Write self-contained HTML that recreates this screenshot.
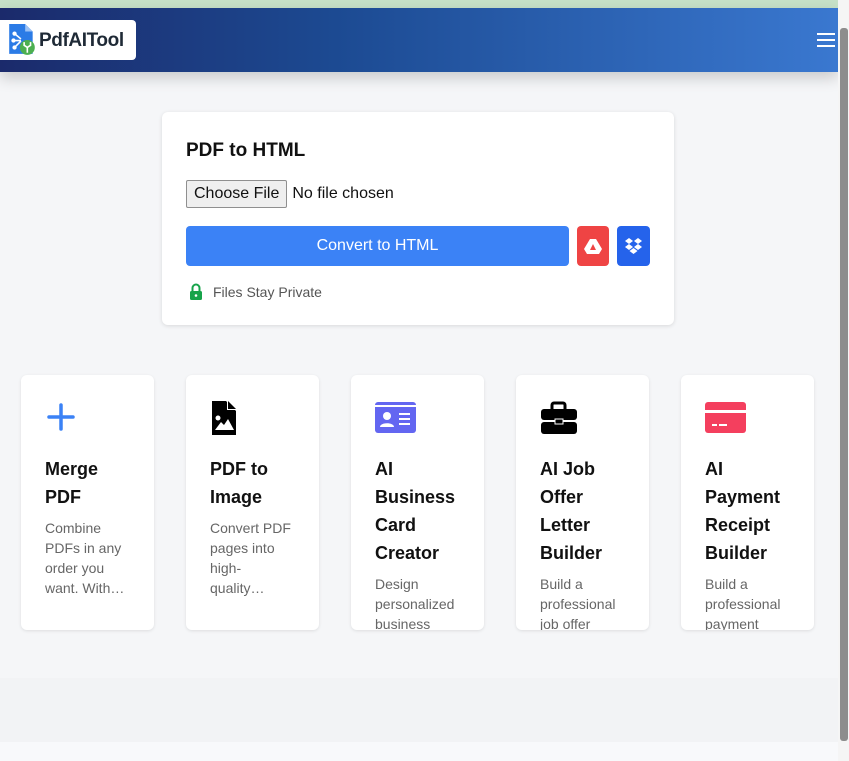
<!DOCTYPE html>
<html><head><style>
*{box-sizing:border-box;margin:0;padding:0}
body{width:849px;height:761px;overflow:hidden;background:#f8f9fb;font-family:"Liberation Sans",Arial,sans-serif;position:relative}
.top{position:absolute;left:0;top:0;width:849px;height:8px;background:#c6e1c8}
.hdr{position:absolute;left:0;top:8px;width:838px;height:64px;background:linear-gradient(90deg,#1b2a6b 0%,#1c4a92 40%,#3a78d0 100%);box-shadow:0 6px 14px rgba(0,0,0,.18)}
.logo{position:absolute;left:0;top:12px;width:136px;height:40px;background:#fff;border-radius:0 4px 4px 0}
.logo svg{position:absolute;left:7px;top:4px}
.logo span{position:absolute;left:39px;top:10px;font-size:19px;color:#1f2a36;font-weight:bold;letter-spacing:-.4px}
.burger{position:absolute;left:817px;top:25px;width:18px}
.burger i{display:block;height:2px;background:#fff;margin-bottom:4px}
.sect{position:absolute;left:0;top:72px;width:838px;height:253px;background:#f5f6f8}
.card1{position:absolute;left:162px;top:112px;width:512px;height:213px;background:#fff;border-radius:6px;box-shadow:0 1px 4px rgba(0,0,0,.12)}
.card1 h2{position:absolute;left:24px;top:28px;font-size:19px;font-weight:bold;color:#111}
.file{position:absolute;left:24px;top:68px;font-size:16px;color:#111;display:flex;align-items:center}
.file b{font-weight:normal;display:inline-block;border:1px solid #8f8f8f;background:#efefef;border-radius:2px;padding:4px 7px;margin-right:5px}
.conv{position:absolute;left:24px;top:114px;width:383px;height:40px;background:#3b82f6;border-radius:4px;color:#fff;font-size:16px;text-align:center;line-height:40px}
.gd{position:absolute;left:415px;top:114px;width:32px;height:40px;background:#ef4444;border-radius:4px}
.db{position:absolute;left:455px;top:114px;width:33px;height:40px;background:#2563eb;border-radius:4px}
.priv{position:absolute;left:27px;top:171px;font-size:14px;color:#555;display:flex;align-items:center}
.lower{position:absolute;left:0;top:325px;width:838px;height:353px;background:#f5f6f8}
.band{position:absolute;left:0;top:678px;width:838px;height:64px;background:#f2f3f5}
.tc{position:absolute;top:375px;width:133px;height:255px;background:#fff;border-radius:6px;box-shadow:0 1px 3px rgba(0,0,0,.1);overflow:hidden}
.tc svg{position:absolute;left:24px;top:26px}
.tc h3{position:absolute;left:24px;top:80px;width:78px;font-size:18px;line-height:28px;font-weight:bold;color:#111}
.tc p{position:absolute;left:24px;width:88px;font-size:14px;line-height:20px;color:#666;overflow:hidden;white-space:nowrap}
.sb{position:absolute;left:838px;top:0;width:11px;height:761px;background:#f5f5f5}
.sb i{position:absolute;left:2px;top:28px;width:8px;height:713px;background:#8d8d8d;border-radius:3px}
</style></head><body>
<div class="top"></div>
<div class="sect"></div>
<div class="lower"></div>
<div class="band"></div>
<div class="hdr">
 <div class="logo">
  <svg width="30" height="32" viewBox="0 0 28 30">
   <path d="M2 0h15l7 7v21H2z" fill="#2b7be6"/>
   <path d="M17 0v7h7z" fill="#9cc2f5"/>
   <circle cx="7" cy="9" r="2" fill="#fff"/><circle cx="7" cy="22" r="2" fill="#fff"/><circle cx="6" cy="15.5" r="2" fill="#fff"/>
   <path d="M7 9l6 5M6 15.5h7M7 22l6-6" stroke="#fff" stroke-width="1.5"/>
   <circle cx="19" cy="22" r="7" fill="#4caf50"/>
   <path d="M19 27v-6M16 17v3l3 2 3-2v-3" stroke="#fff" stroke-width="1.5" fill="none"/>
  </svg>
  <span>PdfAITool</span>
 </div>
 <div class="burger"><i></i><i></i><i></i></div>
</div>
<div class="card1">
 <h2>PDF to HTML</h2>
 <div class="file"><b>Choose File</b>No file chosen</div>
 <div class="conv">Convert to HTML</div>
 <div class="gd"><svg width="32" height="40" viewBox="0 0 32 40"><path d="M13 13h6l6 10-3 5H10l-3-5z" fill="#fff"/><path d="M16 18l-3 6h6z" fill="#ef4444"/></svg></div>
 <div class="db"><svg width="33" height="40" viewBox="0 0 33 40"><g fill="#fff"><path d="M12 12l4 3-4 3-4-3z"/><path d="M21 12l4 3-4 3-4-3z"/><path d="M12 18l4 3-4 3-4-3z"/><path d="M21 18l4 3-4 3-4-3z"/><path d="M16.5 22l4 3-4 3-4-3z"/></g></svg></div>
 <div class="priv"><svg width="14" height="17" viewBox="0 0 14 17" style="margin-right:10px"><path d="M3.5 8V5a3.5 3.5 0 0 1 7 0v3" stroke="#16a34a" stroke-width="2" fill="none"/><rect x="1" y="8" width="12" height="9" rx="1.5" fill="#16a34a"/><circle cx="7" cy="12.5" r="1.3" fill="#fff"/></svg>Files Stay Private</div>
</div>

<div class="tc" style="left:21px"><svg width="32" height="32" viewBox="0 0 32 32"><path d="M16 4v24M4 16h24" stroke="#3b82f6" stroke-width="3.5" stroke-linecap="round"/></svg>
<h3>Merge PDF</h3><p style="top:143px;height:80px">Combine<br>PDFs in any<br>order you<br>want. With…</p></div>
<div class="tc" style="left:186px"><svg width="32" height="40" viewBox="0 0 32 40"><path d="M2 0h14l10 10v24H2z" fill="#000"/><path d="M17 0v9h9" fill="#fff"/><path d="M18 0l8 8h-8z" fill="#000"/><circle cx="8" cy="17" r="2.5" fill="#fff"/><path d="M5 29l6-8 3 3 4-6 6 11z" fill="#fff"/></svg>
<h3>PDF to Image</h3><p style="top:143px;height:80px">Convert PDF<br>pages into<br>high-<br>quality…</p></div>
<div class="tc" style="left:351px"><svg width="42" height="34" viewBox="0 0 42 34"><rect x="0" y="1" width="41" height="31" rx="3" fill="#6366f1"/><rect x="0" y="4" width="41" height="2" fill="#fff"/><circle cx="12" cy="15" r="4" fill="#fff"/><path d="M5 26c0-5 14-5 14 0z" fill="#fff"/><path d="M24 13h11M24 18h11M24 23h11" stroke="#fff" stroke-width="2"/></svg>
<h3>AI Business Card Creator</h3><p style="top:199px;width:86px;height:56px">Design<br>personalized<br>business</p></div>
<div class="tc" style="left:516px"><svg width="38" height="34" viewBox="0 0 38 34"><path d="M12 8V4a2 2 0 0 1 2-2h9a2 2 0 0 1 2 2v4" stroke="#000" stroke-width="3" fill="none"/><rect x="1" y="8" width="36" height="11" rx="3" fill="#000"/><rect x="1" y="21" width="36" height="12" rx="3" fill="#000"/><rect x="15" y="18" width="8" height="5" fill="#000" stroke="#fff" stroke-width="1"/></svg>
<h3>AI Job<br>Offer<br>Letter<br>Builder</h3><p style="top:199px;height:56px">Build a<br>professional<br>job offer</p></div>
<div class="tc" style="left:681px"><svg width="42" height="34" viewBox="0 0 42 34"><rect x="0" y="1" width="41" height="31" rx="3" fill="#f43f5e"/><rect x="0" y="9" width="41" height="3" fill="#fff"/><path d="M7 24h5M14 24h8" stroke="#fff" stroke-width="2"/></svg>
<h3>AI<br>Payment<br>Receipt<br>Builder</h3><p style="top:199px;height:56px">Build a<br>professional<br>payment</p></div>
<div class="sb"><i></i></div>
</body></html>
